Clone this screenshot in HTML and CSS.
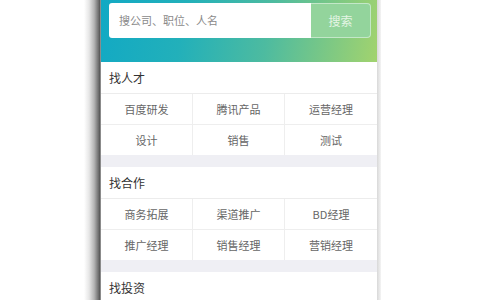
FILE: index.html
```html
<!DOCTYPE html>
<html lang="zh">
<head>
<meta charset="utf-8">
<link rel="stylesheet" href="styles.css">
</head>
<body>
<div class="stage">
  <div class="bezel-left"></div>
  <div class="screen">
    <header class="hero">
      <div class="search">
        <div class="search-input">搜公司、职位、人名</div>
        <div class="search-btn">搜索</div>
      </div>
    </header>
    <section class="block">
      <div class="block-title">找人才</div>
      <div class="grid">
        <div class="cell">百度研发</div>
        <div class="cell">腾讯产品</div>
        <div class="cell">运营经理</div>
        <div class="cell">设计</div>
        <div class="cell">销售</div>
        <div class="cell">测试</div>
      </div>
    </section>
    <section class="block">
      <div class="block-title">找合作</div>
      <div class="grid">
        <div class="cell">商务拓展</div>
        <div class="cell">渠道推广</div>
        <div class="cell">BD经理</div>
        <div class="cell">推广经理</div>
        <div class="cell">销售经理</div>
        <div class="cell">营销经理</div>
      </div>
    </section>
    <section class="block">
      <div class="block-title">找投资</div>
    </section>
  </div>
  <div class="bezel-right"></div>
</div>
</body>
</html>
```
FILE: styles.css
```css
html, body {
  margin: 0;
  padding: 0;
}
body {
  width: 480px;
  height: 300px;
  overflow: hidden;
  background: #ffffff;
  font-family: "Noto Sans CJK SC", "Noto Sans", sans-serif;
}
.stage {
  display: flex;
  height: 300px;
  padding-left: 84px;
}
.bezel-left {
  width: 17px;
  background: linear-gradient(to right, #ffffff 0%, #e6e6e6 30%, #b4b4b4 60%, #707070 85%, #5a5a5a 92%, #a8a8a8 100%);
}
.screen {
  width: 276px;
  background: #efeff4;
  overflow: hidden;
}
.bezel-right {
  width: 4px;
  background: linear-gradient(to right, #d8d8d8, #f4f4f4);
}
.hero {
  height: 62px;
  background: linear-gradient(100deg, #12a9c4 0%, #22b0ba 30%, #4dbba0 60%, #a2d36e 100%);
  padding: 3px 6px 0 8px;
  box-sizing: border-box;
}
.search {
  display: flex;
  height: 35px;
  width: 262px;
}
.search-input {
  flex: 1;
  background: #ffffff;
  border-radius: 3px 0 0 3px;
  color: #8a8a8a;
  font-size: 11px;
  line-height: 35px;
  padding-left: 10px;
}
.search-btn {
  width: 60px;
  box-sizing: border-box;
  background: #93d49c;
  border: 1px solid rgba(255, 255, 255, 0.45);
  border-left: none;
  border-radius: 0 4px 4px 0;
  color: #e4f5e4;
  font-size: 12px;
  text-align: center;
  line-height: 33px;
}
.block {
  background: #ffffff;
  margin-bottom: 12px;
}
.block-title {
  height: 31px;
  line-height: 32px;
  padding-left: 8px;
  font-size: 12px;
  color: #333333;
  border-bottom: 1px solid #ececec;
}
.grid {
  display: grid;
  grid-template-columns: 92px 92px 92px;
}
.cell {
  height: 30px;
  line-height: 30px;
  text-align: center;
  font-size: 11px;
  color: #666666;
  border-bottom: 1px solid #eeeeee;
  border-right: 1px solid #eeeeee;
}
.cell:nth-child(3n) {
  border-right: none;
}
.cell:nth-child(n+4) {
  border-bottom: none;
}
```
